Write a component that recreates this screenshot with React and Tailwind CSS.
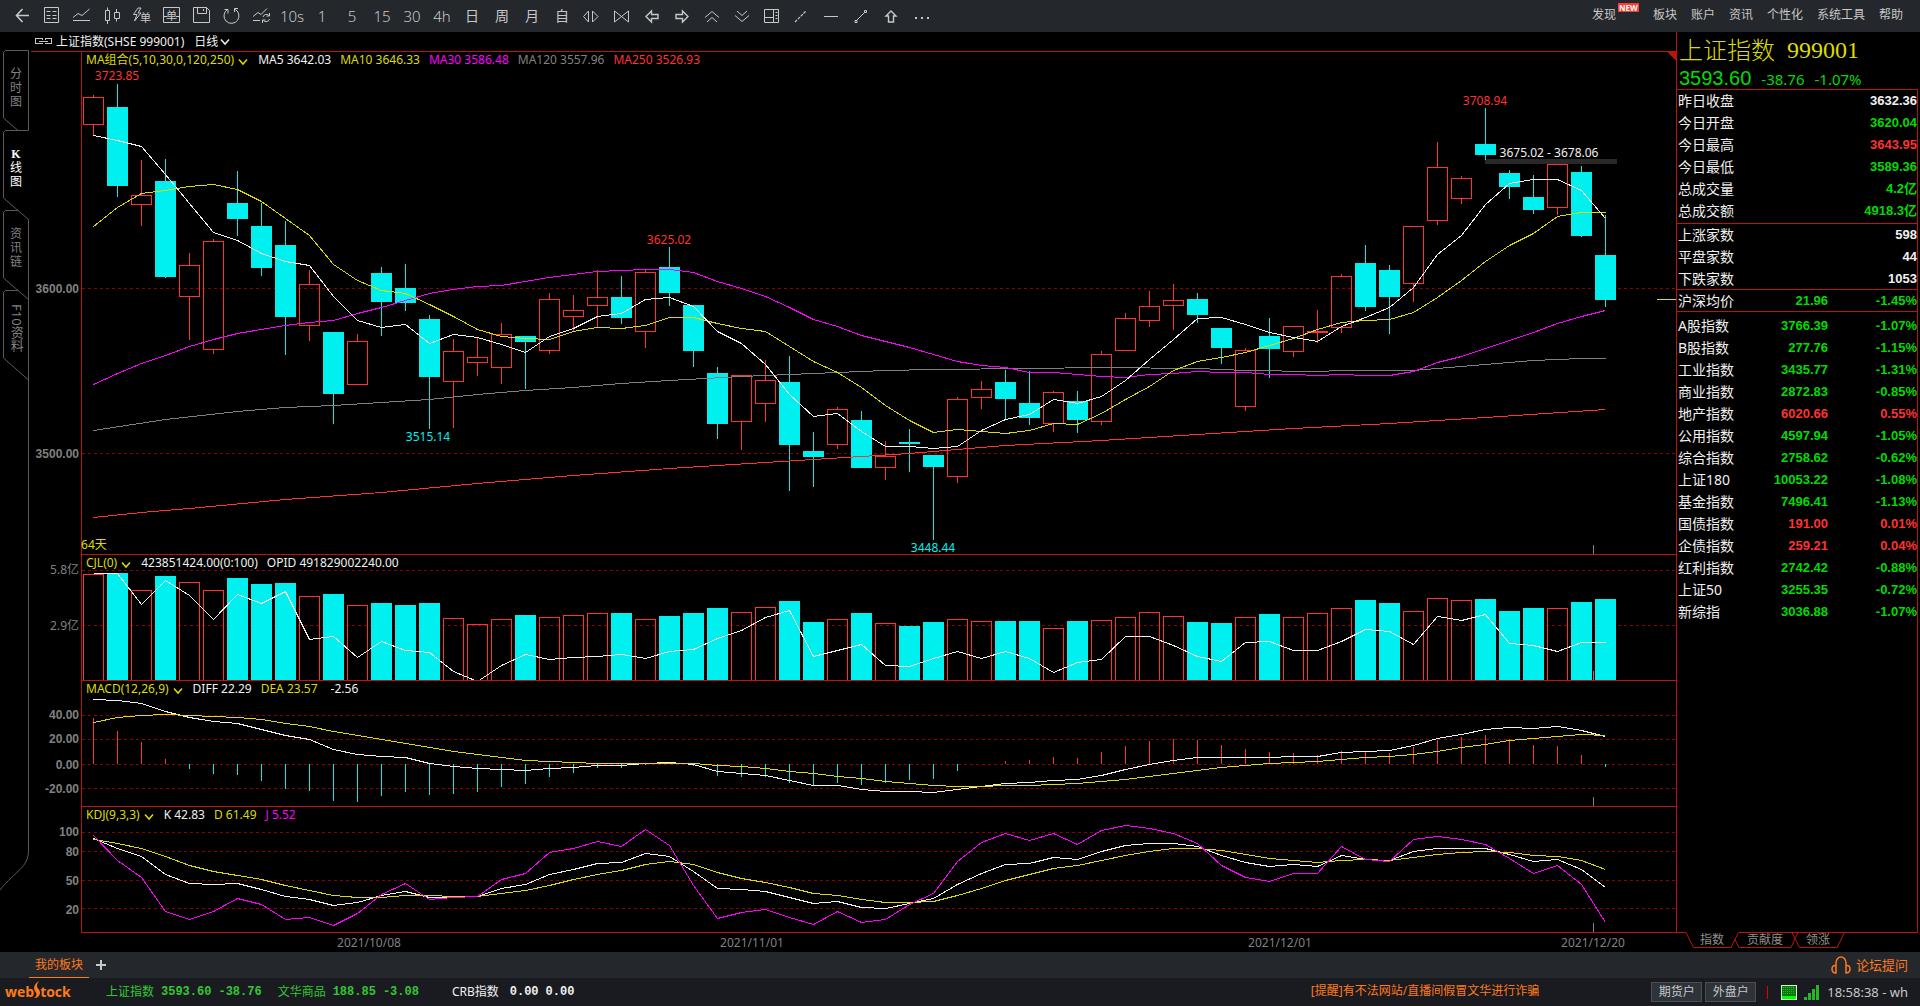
import React, { useState } from 'react';

// Horizontal layout of the plots: first bar centre, distance between bars
const X0 = 93.5;
const STEP = 24;
const PLOT_LEFT = 82;
const PLOT_WIDTH = 1594;

const barX = (i) => X0 + i * STEP;

// [rising, high, body top, body bottom, low]
const candles = [
  [1, 95, 97, 124, 135], [0, 84, 107, 186, 197], [1, 160, 195, 204, 226], [0, 159, 181, 277, 278],
  [1, 253, 265, 296, 340], [1, 239, 241, 349, 354], [0, 171, 203, 219, 236], [0, 203, 226, 268, 276],
  [0, 221, 245, 317, 355], [1, 270, 284, 325, 341], [0, 332, 332, 394, 424], [1, 334, 341, 384, 384],
  [0, 267, 273, 302, 336], [0, 264, 288, 303, 311], [0, 315, 319, 377, 429], [1, 339, 351, 381, 428],
  [1, 338, 357, 362, 376], [1, 323, 334, 367, 384], [0, 336, 336, 342, 389], [1, 293, 299, 350, 354],
  [1, 295, 310, 316, 331], [1, 270, 297, 305, 328], [0, 276, 297, 318, 324], [1, 269, 272, 331, 348],
  [0, 247, 267, 293, 306], [0, 305, 305, 351, 367], [0, 367, 373, 424, 439], [1, 375, 375, 421, 450],
  [1, 360, 380, 403, 422], [0, 356, 382, 445, 491], [0, 432, 451, 457, 487], [1, 407, 409, 444, 449],
  [0, 411, 420, 468, 468], [1, 441, 456, 467, 480], [0, 429, 442, 444, 472], [0, 455, 455, 467, 540],
  [1, 397, 399, 476, 483], [1, 381, 389, 397, 409], [0, 370, 382, 399, 419], [0, 371, 403, 418, 425],
  [1, 391, 392, 423, 432], [0, 391, 401, 420, 433], [1, 351, 354, 421, 425], [1, 313, 318, 350, 350],
  [1, 291, 306, 320, 327], [1, 284, 300, 305, 330], [0, 293, 299, 315, 323], [0, 328, 328, 348, 364],
  [1, 348, 350, 406, 411], [0, 318, 336, 349, 378], [1, 326, 326, 351, 357], [1, 310, 331, 332, 343],
  [1, 274, 276, 327, 333], [0, 245, 263, 307, 311], [0, 265, 270, 297, 334], [1, 226, 226, 283, 302],
  [1, 142, 167, 220, 225], [1, 176, 178, 198, 204], [0, 108, 144, 155, 160], [0, 170, 173, 187, 199],
  [0, 175, 197, 210, 214], [1, 164, 164, 207, 215], [0, 166, 172, 236, 237], [0, 215, 255, 300, 307],
];

const ma5 = [
  135, 140, 146, 174, 203, 232, 240, 253, 261, 265, 296, 320, 327, 324, 343, 334, 337, 344, 352, 336, 328, 316,
  313, 299, 297, 306, 331, 343, 364, 394, 416, 413, 431, 446, 446, 448, 446, 430, 419, 414, 399, 403, 396, 380,
  359, 339, 318, 317, 324, 332, 337, 341, 326, 317, 307, 287, 254, 235, 204, 183, 179, 179, 190, 218,
];
const ma10 = [
  226, 207, 193, 190, 186, 184, 189, 201, 218, 235, 264, 280, 290, 293, 304, 316, 329, 336, 338, 339, 331, 327,
  328, 325, 317, 317, 323, 328, 331, 346, 361, 372, 387, 405, 420, 432, 429, 431, 433, 430, 423, 424, 413, 399,
  386, 370, 361, 357, 352, 345, 338, 329, 322, 320, 319, 312, 297, 280, 261, 245, 233, 216, 212, 212,
];
const ma30 = [
  384, 373, 363, 355, 346, 339, 333, 329, 325, 322, 320, 313, 307, 300, 293, 289, 286, 285, 281, 277, 274, 271,
  270, 269, 269, 272, 281, 288, 296, 307, 319, 326, 335, 341, 347, 354, 361, 365, 367, 372, 372, 374, 376, 377,
  374, 373, 371, 372, 372, 374, 374, 375, 374, 375, 375, 371, 362, 356, 348, 340, 332, 323, 316, 310,
];
// The slow averages only need a node every few bars: [bar, y]
const ma120 = [
  [0, 430], [3, 419], [6, 411], [8, 407], [10, 405], [12, 402], [14, 399], [16, 394], [18, 390], [20, 387],
  [22, 383], [24, 380], [27, 376], [30, 373], [33, 370], [35, 369], [39, 368], [42, 367], [46, 368], [48, 370],
  [51, 371], [52, 370], [55, 370], [57, 366], [60, 360], [62, 358], [63, 358],
];
const ma250 = [
  [0, 517], [2, 512], [4, 508], [8, 499], [12, 492], [16, 483], [20, 475], [24, 468], [26, 465], [30, 459],
  [34, 453], [38, 445], [42, 440], [46, 434], [50, 428], [54, 423], [58, 417], [63, 409],
];

const volumes = [
  574, 573, 590, 576, 582, 590, 578, 584, 583, 596, 594, 605, 603, 605, 603, 618, 624, 619, 615, 617, 615, 613,
  613, 619, 616, 613, 608, 612, 607, 601, 622, 619, 613, 623, 626, 622, 619, 621, 621, 621, 628, 621, 620, 617,
  612, 616, 622, 623, 617, 614, 617, 613, 608, 600, 603, 611, 598, 600, 599, 611, 608, 608, 602, 599,
];
const opid = [
  573, 573, 604, 580, 595, 619, 594, 603, 591, 639, 636, 657, 641, 650, 652, 671, 681, 665, 654, 659, 657, 656,
  654, 658, 651, 649, 638, 630, 617, 610, 656, 650, 644, 665, 666, 658, 651, 658, 651, 658, 672, 662, 659, 636,
  636, 645, 656, 661, 642, 641, 650, 650, 641, 629, 631, 644, 616, 620, 614, 643, 645, 651, 642, 642,
];

const MACD_ZERO = 764;
const macdBars = [
  718, 731, 742, 759, 769, 774, 775, 781, 789, 791, 801, 802, 796, 792, 795, 794, 792, 787, 784, 777, 773, 768,
  768, 765, 763, 766, 776, 777, 777, 783, 785, 783, 785, 783, 780, 779, 771, 764, 761, 760, 757, 758, 752, 746,
  741, 739, 740, 745, 749, 752, 753, 755, 751, 752, 753, 747, 740, 737, 735, 739, 745, 746, 755, 767,
];
const diff = [
  699, 700, 703, 711, 717, 721, 723, 729, 735, 739, 749, 754, 756, 757, 763, 766, 768, 769, 770, 768, 767, 765,
  765, 763, 762, 764, 771, 773, 775, 780, 785, 785, 789, 791, 791, 792, 789, 786, 783, 782, 780, 779, 775, 769,
  764, 760, 757, 757, 757, 757, 756, 756, 752, 751, 750, 745, 738, 734, 729, 727, 728, 726, 730, 736,
];
const dea = [
  722, 717, 715, 714, 715, 716, 717, 719, 723, 726, 731, 735, 739, 743, 747, 751, 754, 757, 760, 761, 762, 763,
  763, 763, 763, 763, 765, 766, 768, 771, 773, 776, 778, 781, 783, 785, 786, 786, 785, 785, 784, 783, 781, 779,
  776, 773, 770, 767, 765, 763, 762, 761, 759, 757, 756, 754, 751, 747, 744, 740, 738, 736, 734, 735,
];

const kLine = [
  838, 848, 856, 874, 883, 884, 883, 889, 896, 899, 905, 902, 895, 891, 897, 897, 896, 888, 884, 874, 869, 863,
  862, 853, 856, 871, 888, 889, 891, 897, 903, 901, 907, 908, 903, 898, 884, 873, 864, 863, 857, 859, 851, 845,
  843, 843, 846, 855, 862, 866, 864, 866, 855, 859, 860, 851, 848, 848, 848, 854, 861, 859, 869, 887,
];
const dLine = [
  839, 843, 848, 856, 865, 871, 875, 879, 885, 890, 895, 897, 897, 895, 895, 896, 896, 893, 890, 885, 879, 874,
  870, 864, 861, 864, 872, 878, 882, 887, 893, 895, 899, 902, 902, 901, 895, 888, 880, 874, 868, 865, 860, 855,
  851, 848, 848, 850, 854, 858, 860, 862, 860, 859, 860, 857, 854, 852, 851, 852, 855, 856, 860, 869,
];
const jLine = [
  835, 860, 877, 911, 919, 911, 898, 904, 919, 917, 925, 913, 894, 883, 899, 897, 896, 879, 873, 852, 848, 841,
  846, 829, 845, 885, 918, 912, 909, 917, 924, 911, 922, 919, 904, 893, 861, 842, 833, 840, 833, 844, 830, 825,
  828, 833, 843, 865, 877, 881, 873, 873, 846, 859, 861, 839, 836, 839, 844, 858, 873, 865, 884, 922,
];

const dates = [
  { x: 369, label: '2021/10/08' },
  { x: 752, label: '2021/11/01' },
  { x: 1280, label: '2021/12/01' },
  { x: 1593, label: '2021/12/20' },
];

const quote = [
  ['昨日收盘', '3632.36', 'text-[#f0f0f0]'],
  ['今日开盘', '3620.04', 'text-[#00dc00]'],
  ['今日最高', '3643.95', 'text-[#ff3232]'],
  ['今日最低', '3589.36', 'text-[#00dc00]'],
  ['总成交量', '4.2亿', 'text-[#00dc00]'],
  ['总成交额', '4918.3亿', 'text-[#00dc00]'],
];
const breadth = [
  ['上涨家数', '598', 'text-[#f0f0f0]'],
  ['平盘家数', '44', 'text-[#f0f0f0]'],
  ['下跌家数', '1053', 'text-[#f0f0f0]'],
];
const average = [['沪深均价', '21.96', '-1.45%']];
const indices = [
  ['A股指数', '3766.39', '-1.07%'],
  ['B股指数', '277.76', '-1.15%'],
  ['工业指数', '3435.77', '-1.31%'],
  ['商业指数', '2872.83', '-0.85%'],
  ['地产指数', '6020.66', '0.55%'],
  ['公用指数', '4597.94', '-1.05%'],
  ['综合指数', '2758.62', '-0.62%'],
  ['上证180', '10053.22', '-1.08%'],
  ['基金指数', '7496.41', '-1.13%'],
  ['国债指数', '191.00', '0.01%'],
  ['企债指数', '259.21', '0.04%'],
  ['红利指数', '2742.42', '-0.88%'],
  ['上证50', '3255.35', '-0.72%'],
  ['新综指', '3036.88', '-1.07%'],
];

const tools = [
  { id: 'back', icon: <path strokeWidth="1.6" d="M17 9.5H4.500M10.500 3L4.500 9.500l6 6.500" /> },
  { id: 'list', icon: <path d="M2.500 1.500h14v15h-14zM4.500 5.500h4M10.500 5.500h4M4.500 9.500h4M10.500 9.500h4M4.500 12.500h4M10.500 12.500h4" /> },
  { id: 'line', icon: <path d="M1 11.500l5-4 4 2L17.500 3M1 14.500h17" /> },
  { id: 'candles', icon: <path d="M3.500 4.500h4v10h-4zM5.500 1.500v3M5.500 14.500v3.500M12.500 6.500h5v6h-5zM14.500 3v3.500M14.500 12.500v3" /> },
  {
    id: 'quick order',
    icon: (
      <>
        <path d="M6 2L1.500 8.500H5L2.500 15 9 7H6l3-5z" />
        <text x="8" y="16" fontSize="11" fill="currentColor" stroke="none">单</text>
      </>
    ),
  },
  {
    id: 'order',
    icon: (
      <>
        <path d="M1.500 1.500h16v15h-16zM1.500 10.500h4M14 10.500h4" />
        <text x="4" y="14" fontSize="11" fill="currentColor" stroke="none">单</text>
      </>
    ),
  },
  { id: 'save', icon: <path d="M1.500 1.500h13l3 3v12h-16zM5.500 1.500v6h9v-6M11.500 3v2" /> },
  { id: 'refresh', icon: <path d="M5.500 3.500a7.500 7.500 0 1 0 7-.5M2.500 3.500h3.500v4M12.500 6V2.500H16" /> },
  { id: 'auto', icon: <path d="M1 10.500l5-4 3 2 6-6M1 14.500h7M11 11a3.500 3.500 0 0 1 6-1.500M17.500 7v3h-3M17.500 13a3.500 3.500 0 0 1-6 1.500M10.500 17v-3h3" /> },
  { id: '10s', text: '10s' },
  { id: '1', text: '1' },
  { id: '5', text: '5' },
  { id: '15', text: '15' },
  { id: '30', text: '30' },
  { id: '4h', text: '4h' },
  { id: 'day', cjk: '日' },
  { id: 'week', cjk: '周' },
  { id: 'month', cjk: '月' },
  { id: 'custom', cjk: '自' },
  { id: 'expand', icon: <path d="M1.500 10.500l5-5.500v11zM10.500 5v11l5.500-5.500z" /> },
  { id: 'shrink', icon: <path d="M2.500 5v11l7-5.500zM16.500 5v11l-7-5.500z" /> },
  { id: 'prev', icon: <path strokeWidth="1.4" d="M4 10.500L9.500 5v3.500h6.500v4H9.500V16z" /> },
  { id: 'next', icon: <path strokeWidth="1.4" d="M16 10.500L10.500 5v3.500H4v4h6.500V16z" /> },
  { id: 'up', icon: <path d="M3 11.500l7-6 7 6M5 16l5-4.500 5 4.500" /> },
  { id: 'down', icon: <path d="M3 9.500l7 6 7-6M5 5l5 4.500L15 5" /> },
  { id: 'layout', icon: <path d="M2.500 3.500h14v13h-14zM11.500 3.500v13M2.500 11.500h9M13.500 6.500h2M13.500 9.500h2M13.500 12.500h2" /> },
  { id: 'ray', icon: <path strokeDasharray="3 1" strokeWidth="1.2" d="M3 16L14 5" /> },
  { id: 'horizontal', icon: <path d="M2 10.500h14" /> },
  { id: 'trend', icon: <path d="M4 15L13 6M3 14.500h2v2H3zM12.500 4.500h2v2h-2z" /> },
  { id: 'arrow', icon: <path strokeWidth="1.4" d="M9 5l5 5h-2.500v6h-5v-6H4z" /> },
  { id: 'more', icon: <path strokeWidth="2" d="M3 12h2M9 12h2M15 12h2" /> },
];

const toPoints = (series) =>
  series.map((p, i) => (Array.isArray(p) ? `${barX(p[0])},${p[1] + 0.5}` : `${barX(i)},${p + 0.5}`)).join(' ');

const Line = ({ data, color }) => (
  <polyline points={toPoints(data)} fill="none" stroke={color} strokeWidth="1" />
);

const Chevron = ({ className }) => (
  <svg width="10" height="8" viewBox="0 0 10 8" fill="none" stroke="currentColor" strokeWidth="1.5" className={className}>
    <path d="M1 1.500l4 4.500 4-4.500" />
  </svg>
);

// One chart pane: value axis at the left, plot with grid, legend on top
const Pane = ({ className, plotClass = '', top, height, ticks, light, legend, children, labels = [] }) => (
  <section className={`flex min-h-0 ${className}`}>
    <div className="relative w-[50px] shrink-0">
      {ticks.map((t) => (
        <span
          key={t.label}
          className={`absolute right-0.5 -translate-y-1/2 whitespace-nowrap text-xs text-[#808080] ${light ? '' : "font-bold font-['Liberation_Sans',sans-serif]"}`}
          style={{ top: `${((t.y + 1 - top) / height) * 100}%` }}
        >
          {t.label}
        </span>
      ))}
    </div>
    <div className={`relative min-w-0 flex-1 border-l border-[#bb1408] ${plotClass}`}>
      <svg
        className="absolute inset-0 h-full w-full"
        viewBox={`${PLOT_LEFT} ${top} ${PLOT_WIDTH} ${height}`}
        preserveAspectRatio="none"
        shapeRendering="crispEdges"
      >
        {ticks.map((t) => (
          <line key={t.label} x1={PLOT_LEFT} x2={PLOT_LEFT + PLOT_WIDTH} y1={t.y + 0.5} y2={t.y + 0.5} stroke="#8c0000" strokeDasharray="3 3" />
        ))}
        {children}
        <line x1="1593.5" x2="1593.5" y1={top + height - 9} y2={top + height} stroke="#808080" />
      </svg>
      <div className="relative flex items-center gap-[9px] whitespace-nowrap pl-1 text-xs leading-4">{legend}</div>
      {labels.map((l) => (
        <span
          key={l.text}
          className={`absolute -translate-x-1/2 -translate-y-1/2 whitespace-nowrap text-xs ${l.color}`}
          style={{ left: `${((l.x - PLOT_LEFT) / PLOT_WIDTH) * 100}%`, top: `${((l.y - top) / height) * 100}%` }}
        >
          {l.text}
        </span>
      ))}
    </div>
  </section>
);

const IndicatorButton = ({ children }) => (
  <button className="flex items-center gap-1 pr-px text-[#dcdc00]">
    {children}
    <Chevron className="mt-1" />
  </button>
);

const QuoteTable = ({ rows }) => (
  <table className="w-full">
    <tbody>
      {rows.map(([label, value, color]) => (
        <tr key={label} className="h-[22px]">
          <th scope="row" className="pl-px text-left text-sm leading-5 font-normal text-[#f0f0f0]">{label}</th>
          <td className={`text-right font-['Liberation_Sans','Noto_Sans_CJK_SC',sans-serif] text-[13px] leading-5 font-bold ${color}`}>{value}</td>
        </tr>
      ))}
    </tbody>
  </table>
);

const IndexTable = ({ rows }) => (
  <table className="w-full table-fixed">
    <tbody>
      {rows.map(([label, value, change]) => {
        const color = change.startsWith('-') ? 'text-[#00dc00]' : 'text-[#ff3232]';
        return (
          <tr key={label} className="h-[22px]">
            <th scope="row" className="w-20 pl-px text-left text-sm leading-5 font-normal text-[#f0f0f0]">{label}</th>
            <td className={`w-[71px] text-right font-['Liberation_Sans',sans-serif] text-[13px] leading-5 font-bold ${color}`}>{value}</td>
            <td className={`text-right font-['Liberation_Sans',sans-serif] text-[13px] leading-5 font-bold ${color}`}>{change}</td>
          </tr>
        );
      })}
    </tbody>
  </table>
);

const SideTab = ({ text, active, onClick }) => (
  <button
    onClick={onClick}
    className={`flex h-20 w-[31px] flex-col items-center justify-center pb-1 pl-px text-xs leading-[14px] ${active ? 'text-white' : 'text-[#808080]'}`}
  >
    {text.split('').map((c) => (
      <span key={c} className={c === 'K' ? "font-['Liberation_Serif',serif] font-bold" : ''}>{c}</span>
    ))}
  </button>
);

const App = () => {
  const [view, setView] = useState('K线图');

  return (
    <div className="flex h-screen flex-col overflow-hidden bg-black font-['Noto_Sans','Noto_Sans_CJK_SC',sans-serif] text-xs text-[#f0f0f0]">
      {/* Toolbar */}
      <header className="flex h-8 shrink-0 items-center justify-between bg-[#24272c] pr-[17px] pl-[7px] text-[#c8c8c8]">
        <div className="flex">
          {tools.map((tool) => (
            <button key={tool.id} aria-label={tool.id} className="flex h-8 w-[30px] items-center justify-center">
              {tool.icon && (
                <svg width="20" height="20" viewBox="0 0 20 20" fill="none" stroke="currentColor" strokeWidth="1">
                  {tool.icon}
                </svg>
              )}
              {tool.text && <span className="text-[15px] leading-4 font-light">{tool.text}</span>}
              {tool.cjk && <span className="text-sm leading-4">{tool.cjk}</span>}
            </button>
          ))}
        </div>
        <nav className="flex gap-3.5 pb-0.5 leading-5 whitespace-nowrap">
          <a href="#discover" className="flex items-start gap-0.5">
            发现
            <span className="-mt-0.5 h-[9px] w-[21px] bg-[#ff3b30] text-center text-[8px] leading-[9px] font-bold text-white">NEW</span>
          </a>
          <a href="#boards">板块</a>
          <a href="#account">账户</a>
          <a href="#news">资讯</a>
          <a href="#personal">个性化</a>
          <a href="#system">系统工具</a>
          <a href="#help">帮助</a>
        </nav>
      </header>

      <main className="flex min-h-0 flex-1">
        {/* View tabs */}
        <nav className="relative w-[31px] shrink-0 pt-[18px]">
          <svg className="absolute inset-0 h-full w-full" viewBox="0 32 31 920" preserveAspectRatio="none" fill="none" stroke="#5a5a5a">
            <path d="M28.500 130.500V50.500H5.500L3.500 52.500V118L18 130.500" />
            <path d="M28.500 130.500H5.500L3.500 132.500V198L28.500 219.500" />
            <path d="M18 210.500H5.500L3.500 212.500V278L28.500 299.500" />
            <path d="M18 290.500H5.500L3.500 292.500V358L28.500 380" />
            <path d="M28.500 219V850C28.500 868 16 870 0 890" />
          </svg>
          <div className="relative flex flex-col">
            {['分时图', 'K线图', '资讯链'].map((t) => (
              <SideTab key={t} text={t} active={view === t} onClick={() => setView(t)} />
            ))}
            <button onClick={() => setView('F10')} className="flex h-20 w-[31px] items-center justify-center pb-1 pl-px text-[13px] text-[#808080] [writing-mode:vertical-rl]">
              F10资料
            </button>
          </div>
        </nav>

        {/* Charts */}
        <div className="flex min-w-0 flex-1 flex-col">
          <div className="relative flex h-5 shrink-0 items-center border-b border-[#bb1408] pl-1">
            <svg width="17" height="7" viewBox="0 0 17 7" fill="none" stroke="#c8c8c8" shapeRendering="crispEdges">
              <path d="M7 1.500V.5H.5v5H7v-1M10 1.500V.5h6v5h-6v-1M4 3.500h9" />
            </svg>
            <h1 className="ml-1 leading-4">上证指数(SHSE 999001)</h1>
            <button className="ml-2.5 flex items-center gap-0.5 leading-4">
              日线
              <Chevron />
            </button>
          </div>

          <Pane
            className="flex-[502]"
            top={52}
            height={502}
            ticks={[{ y: 288, label: '3600.00' }, { y: 453, label: '3500.00' }]}
            labels={[
              { x: 117, y: 76, text: '3723.85', color: 'text-[#ff3232]' },
              { x: 428, y: 437, text: '3515.14', color: 'text-[#00f0f0]' },
              { x: 669, y: 240, text: '3625.02', color: 'text-[#ff3232]' },
              { x: 933, y: 548, text: '3448.44', color: 'text-[#00f0f0]' },
              { x: 1485, y: 101, text: '3708.94', color: 'text-[#ff3232]' },
              { x: 1549, y: 153, text: '3675.02 - 3678.06', color: 'text-[#f0f0f0]' },
              { x: 94, y: 545, text: '64天', color: 'text-[#dcdc00]' },
            ]}
            legend={
              <>
                <IndicatorButton>MA组合(5,10,30,0,120,250)</IndicatorButton>
                <span>MA5 3642.03</span>
                <span className="text-[#dcdc00]">MA10 3646.33</span>
                <span className="text-[#ff00ff]">MA30 3586.48</span>
                <span className="text-[#808080]">MA120 3557.96</span>
                <span className="text-[#ff3232]">MA250 3526.93</span>
              </>
            }
          >
            <rect x="1485" y="159" width="132" height="5" fill="#292929" />
            {candles.map(([up, high, top, bottom, low], i) => {
              const x = barX(i);
              return up ? (
                <g key={i} stroke="#ff3232" fill="none">
                  <line x1={x} x2={x} y1={high} y2={top} />
                  <line x1={x} x2={x} y1={bottom} y2={low} />
                  <rect x={x - 10} y={top + 0.5} width="20" height={bottom - top} />
                </g>
              ) : (
                <g key={i} fill="#00f0f0">
                  <rect x={x - 0.5} y={high} width="1" height={low - high} />
                  <rect x={x - 10.5} y={top} width="21" height={bottom - top} />
                </g>
              );
            })}
            <Line data={ma250} color="#ff3232" />
            <Line data={ma120} color="#808080" />
            <Line data={ma30} color="#ff00ff" />
            <Line data={ma10} color="#dcdc00" />
            <Line data={ma5} color="#f0f0f0" />
            <line x1="1657" x2="1676" y1="299.500" y2="299.500" stroke="#dcdc00" />
            <path d="M1667 52h9v9z" fill="#bb1408" />
          </Pane>

          <Pane
            className="flex-[126]"
            plotClass="border-t"
            top={555}
            height={125}
            light
            ticks={[{ y: 570, label: '5.8亿' }, { y: 625, label: '2.9亿' }]}
            legend={
              <>
                <IndicatorButton>CJL(0)</IndicatorButton>
                <span>423851424.00(0:100)</span>
                <span>OPID 491829002240.00</span>
              </>
            }
          >
            {volumes.map((y, i) => {
              const x = barX(i);
              return candles[i][0] ? (
                <rect key={i} x={x - 10} y={y + 0.5} width="20" height={681 - y} fill="none" stroke="#ff3232" />
              ) : (
                <rect key={i} x={x - 10.5} y={y} width="21" height={680 - y} fill="#00f0f0" />
              );
            })}
            <Line data={opid} color="#f0f0f0" />
          </Pane>

          <Pane
            className="flex-[126]"
            plotClass="border-t"
            top={681}
            height={125}
            ticks={[
              { y: 715, label: '40.00' },
              { y: 739, label: '20.00' },
              { y: 764, label: '0.00' },
              { y: 788, label: '-20.00' },
            ]}
            legend={
              <>
                <IndicatorButton>MACD(12,26,9)</IndicatorButton>
                <span>DIFF 22.29</span>
                <span className="text-[#dcdc00]">DEA 23.57</span>
                <span className="pl-1">-2.56</span>
              </>
            }
          >
            {macdBars.map((y, i) => (
              <line key={i} x1={barX(i)} x2={barX(i)} y1={MACD_ZERO} y2={y} stroke={y > MACD_ZERO ? '#00f0f0' : '#ff3232'} />
            ))}
            <Line data={diff} color="#f0f0f0" />
            <Line data={dea} color="#dcdc00" />
          </Pane>

          <Pane
            className="flex-[127]"
            plotClass="border-y"
            top={807}
            height={125}
            ticks={[
              { y: 832, label: '100' },
              { y: 851, label: '80' },
              { y: 880, label: '50' },
              { y: 908, label: '20' },
            ]}
            legend={
              <>
                <IndicatorButton>KDJ(9,3,3)</IndicatorButton>
                <span>K 42.83</span>
                <span className="text-[#dcdc00]">D 61.49</span>
                <span className="text-[#ff00ff]">J 5.52</span>
              </>
            }
          >
            <Line data={kLine} color="#f0f0f0" />
            <Line data={dLine} color="#dcdc00" />
            <Line data={jLine} color="#ff00ff" />
          </Pane>

          {/* Date axis */}
          <div className="relative ml-[51px] h-[19px] shrink-0">
            {dates.map((d) => (
              <span
                key={d.label}
                className="absolute -translate-x-1/2 leading-5 text-[#808080]"
                style={{ left: `${((d.x - PLOT_LEFT) / PLOT_WIDTH) * 100}%` }}
              >
                {d.label}
              </span>
            ))}
          </div>
        </div>

        {/* Quote panel */}
        <aside className="flex w-[244px] shrink-0 flex-col pr-0.5">
          <div className="flex min-h-0 flex-1 flex-col border-l border-[#bb1408]">
            <div className="h-[57px] shrink-0 pl-0.5">
              <h2 className="flex gap-3 text-2xl leading-9 font-light text-[#dcdc00]">
                上证指数 <span className="font-['Liberation_Serif',serif]">999001</span>
              </h2>
              <p className="flex items-baseline gap-[10px] text-[15px] leading-[21px] text-[#00dc00]">
                <span className="font-['Liberation_Sans',sans-serif] text-xl leading-[21px]">3593.60</span>
                <span>-38.76</span>
                <span>-1.07%</span>
              </p>
            </div>
            <div className="min-h-0 flex-1 border-r border-[#bb1408]">
              <div className="h-[134px] border-t border-[#bb1408]"><QuoteTable rows={quote} /></div>
              <div className="h-[66px] border-t border-[#bb1408]"><QuoteTable rows={breadth} /></div>
              <div className="h-[23px] border-y border-[#bb1408]"><IndexTable rows={average} /></div>
              <div className="pt-[3px]"><IndexTable rows={indices} /></div>
            </div>
          </div>
          <div className="relative h-5 shrink-0">
            <svg className="absolute inset-0" width="242" height="20" viewBox="0 0 242 20" fill="none" stroke="#bb1408">
              <path d="M0 .5H10L17.500 15.500H55L62.500 .5H242M59 7.500L63 15.500H115L122 .5M116 .5L123.500 15.500H161L168.500 .5" />
            </svg>
            <div className="relative flex gap-[23px] pl-6 leading-4 text-[#909090]">
              <button>指数</button>
              <button>贡献度</button>
              <button>领涨</button>
            </div>
          </div>
        </aside>
      </main>

      {/* Board bar */}
      <div className="flex h-[26px] shrink-0 items-center justify-between bg-[#24272c] pr-3 pl-[29px] text-[#ff7a1a]">
        <div className="flex h-full items-center gap-[7px]">
          <button className="h-full border-b border-[#ff7a1a] px-1.5">我的板块</button>
          <button aria-label="add" className="text-[#c8c8c8]">
            <svg width="10" height="10" viewBox="0 0 10 10" fill="none" stroke="currentColor" strokeWidth="2">
              <path d="M5 0v10M0 5h10" />
            </svg>
          </button>
        </div>
        <a href="#forum" className="flex items-center gap-[5px] text-[13px] leading-5">
          <svg width="20" height="18" viewBox="0 0 20 18" fill="none" stroke="currentColor" strokeWidth="1.500">
            <path d="M5 10V7a5 6 0 0 1 10 0v3M5 17V9.500C2 9 1 11 1 13s1 4 4 4zM15 17V9.500c3-.5 4 1.500 4 3.500s-1 4-4 4z" />
          </svg>
          论坛提问
        </a>
      </div>

      {/* Status bar */}
      <footer className="flex h-7 shrink-0 items-center bg-[#1a1b20] pr-3 pl-[5px] leading-5 whitespace-nowrap">
        <div className="flex w-[101px] items-center font-['Open_Sans',sans-serif] text-sm leading-5 font-bold text-[#ff7a1a]">
          web
          <svg width="6" height="18" viewBox="0 0 6 18" fill="currentColor" role="img" aria-label="S" className="-mt-1">
            <path d="M5 0C2 2 0 4.500 0 7c0 3 2.500 4 2.500 6.500C2.500 15 1.500 16 0 17c3.500 0 6-2 6-5.500C6 8.500 3 7.500 3 5c0-2 1-3.500 2-5z" />
          </svg>
          tock
        </div>
        <div className="flex gap-4 text-[#32c832]">
          <div className="flex gap-[7px]">
            上证指数 <b className="font-['Liberation_Mono',monospace]">3593.60</b>
            <b className="font-['Liberation_Mono',monospace]">-38.76</b>
          </div>
          <div className="flex gap-[7px]">
            文华商品 <b className="font-['Liberation_Mono',monospace]">188.85</b>
            <b className="font-['Liberation_Mono',monospace]">-3.08</b>
          </div>
        </div>
        <div className="ml-[33px] flex gap-[7px] text-[#f0f0f0]">
          <span className="pr-1">CRB指数</span>
          <b className="font-['Liberation_Mono',monospace]">0.00</b>
          <b className="font-['Liberation_Mono',monospace]">0.00</b>
        </div>
        <a href="#notice" className="mr-[112px] ml-auto pb-0.5 text-[#ff7a1a]">[提醒]有不法网站/直播间假冒文华进行诈骗</a>
        <div className="flex gap-[3px] text-[#c8c8c8]">
          <button className="h-5 w-[51px] border border-[#4c4f54] bg-[#2e333a] text-xs leading-4">期货户</button>
          <button className="h-5 w-[51px] border border-[#4c4f54] bg-[#2e333a] text-xs leading-4">外盘户</button>
        </div>
        <span className="ml-[11px] h-[13px] w-px bg-[#e00000]" />
        <svg className="ml-[13px]" width="16" height="15" viewBox="0 0 16 15" shapeRendering="crispEdges">
          <path d="M0 0h16v15H0z" fill="#d0f0d0" />
          <path d="M1 1h14v10H1z" fill="#0a780a" />
          <path d="M2 2.500h12M2 4.500h12M2 6.500h12M2 8.500h12" stroke="#28b428" strokeDasharray="1 1" />
          <path d="M1 11h14v3H1z" fill="#00ff00" />
        </svg>
        <svg className="ml-[7px]" width="15" height="15" viewBox="0 0 15 15" fill="#28b428" shapeRendering="crispEdges">
          <path d="M0 12h3v3H0zM4 8h3v7H4zM8 4h3v11H8zM12 0h3v15h-3z" />
        </svg>
        <span className="ml-2 text-[13px] text-[#c8c8c8]">18:58:38 - wh</span>
      </footer>
    </div>
  );
};

export default App;
